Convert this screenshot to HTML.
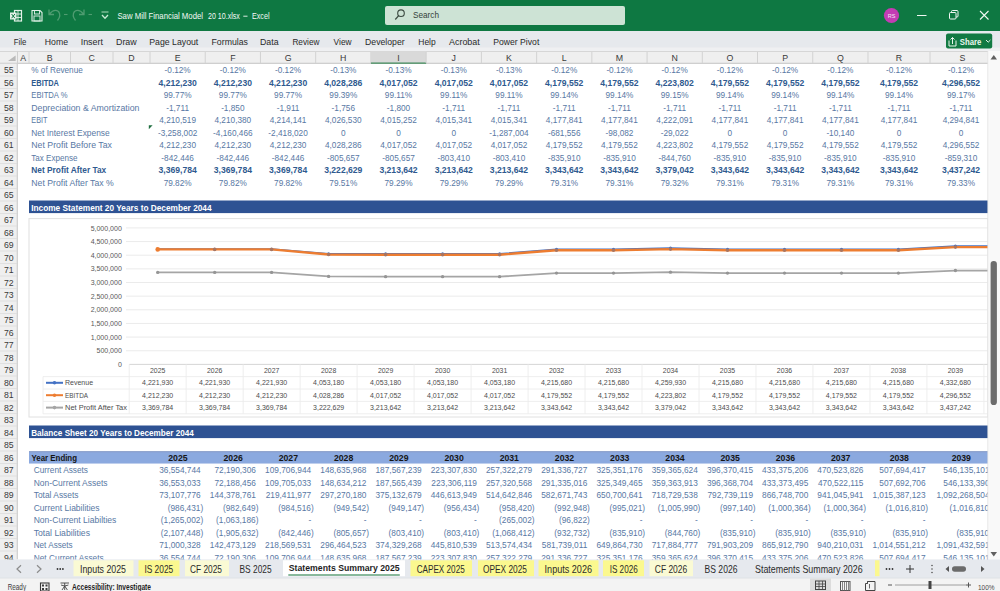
<!DOCTYPE html>
<html><head><meta charset="utf-8"><title>Saw Mill Financial Model - Excel</title>
<style>html,body{margin:0;padding:0;width:1000px;height:591px;overflow:hidden;background:#fff}svg{display:block;font-family:"Liberation Sans",sans-serif}</style></head><body>
<svg width="1000" height="591" viewBox="0 0 1000 591">
<rect x="0.00" y="0.00" width="1000.00" height="31.00" fill="#0e7842" />
<rect x="14.5" y="10.5" width="7" height="10.5" fill="none" stroke="#e3f1e8" stroke-width="1.2"/>
<line x1="14.50" y1="14.00" x2="21.50" y2="14.00" stroke="#e3f1e8" stroke-width="0.9" />
<line x1="14.50" y1="17.50" x2="21.50" y2="17.50" stroke="#e3f1e8" stroke-width="0.9" />
<line x1="18.00" y1="10.50" x2="18.00" y2="21.00" stroke="#e3f1e8" stroke-width="0.9" />
<rect x="10.00" y="12.50" width="6.50" height="7.00" fill="#e3f1e8" />
<path d="M11.6 14 L14.9 18.2 M14.9 14 L11.6 18.2" stroke="#0e7842" stroke-width="1"/>
<path d="M32 10.5 H40 L42 12.5 V21 H32 Z" fill="none" stroke="#e3f1e8" stroke-width="1.1"/>
<rect x="34.5" y="10.5" width="5" height="3.5" fill="none" stroke="#e3f1e8" stroke-width="0.9"/>
<rect x="34" y="16" width="6" height="5" fill="none" stroke="#e3f1e8" stroke-width="0.9"/>
<path d="M49 9.5 V14.5 H54 M49.5 14 Q54 8.5 58.5 11.5 Q61.5 15.5 57.5 20.5" fill="none" stroke="#4f9c71" stroke-width="1.3"/>
<line x1="64.00" y1="14.50" x2="67.50" y2="14.50" stroke="#4f9c71" stroke-width="1.1" />
<path d="M84 9.5 V14.5 H79 M83.5 14 Q79 8.5 74.5 11.5 Q71.5 15.5 75.5 20.5" fill="none" stroke="#4f9c71" stroke-width="1.3"/>
<line x1="88.50" y1="14.50" x2="92.00" y2="14.50" stroke="#4f9c71" stroke-width="1.1" />
<line x1="101.50" y1="12.00" x2="108.50" y2="12.00" stroke="#9fd3b3" stroke-width="1.1" />
<path d="M102 15 L105 18.2 L108 15" fill="none" stroke="#c6ebd4" stroke-width="1.3"/>
<text x="117.40" y="19.00" font-size="9.2" fill="#f2f8f4" textLength="85.70" lengthAdjust="spacingAndGlyphs" >Saw Mill Financial Model</text>
<text x="208.00" y="19.00" font-size="9.2" fill="#f2f8f4" textLength="31.90" lengthAdjust="spacingAndGlyphs" >20 10.xlsx</text>
<line x1="243.30" y1="16.20" x2="247.50" y2="16.20" stroke="#f2f8f4" stroke-width="0.9" />
<text x="252.00" y="19.00" font-size="9.2" fill="#f2f8f4" textLength="17.50" lengthAdjust="spacingAndGlyphs" >Excel</text>
<rect x="385" y="6" width="240" height="19" rx="2" fill="#cde3d5"/>
<circle cx="401" cy="13.2" r="3.3" fill="none" stroke="#3b4a41" stroke-width="1.1"/>
<line x1="398.60" y1="15.60" x2="395.30" y2="19.50" stroke="#3b4a41" stroke-width="1.2" />
<text x="413.00" y="18.00" font-size="9" fill="#34423a" textLength="26.00" lengthAdjust="spacingAndGlyphs" >Search</text>
<circle cx="891.5" cy="15.5" r="7.6" fill="#c33cb4"/>
<text x="891.50" y="17.80" font-size="5.5" fill="#f9e6f6" text-anchor="middle" >RS</text>
<line x1="917.00" y1="15.50" x2="926.50" y2="15.50" stroke="#f0f7f2" stroke-width="1" />
<rect x="949.5" y="12.5" width="6.5" height="6.5" rx="1" fill="none" stroke="#f0f7f2" stroke-width="1"/>
<path d="M951.5 12.5 V11.5 Q951.5 10.5 952.5 10.5 H957 Q958 10.5 958 11.5 V16 Q958 17 957 17 H956" fill="none" stroke="#f0f7f2" stroke-width="1"/>
<path d="M980 11 L988.5 19.5 M988.5 11 L980 19.5" stroke="#f0f7f2" stroke-width="1.1"/>
<rect x="0.00" y="31.00" width="1000.00" height="17.00" fill="#e6e9ed" />
<rect x="0.00" y="47.50" width="1000.00" height="3.50" fill="#eff0f2" />
<text x="13.80" y="45.00" font-size="9" fill="#2a2a2a" textLength="12.60" lengthAdjust="spacingAndGlyphs" >File</text>
<text x="44.80" y="45.00" font-size="9" fill="#2a2a2a" textLength="23.20" lengthAdjust="spacingAndGlyphs" >Home</text>
<text x="80.70" y="45.00" font-size="9" fill="#2a2a2a" textLength="22.30" lengthAdjust="spacingAndGlyphs" >Insert</text>
<text x="116.00" y="45.00" font-size="9" fill="#2a2a2a" textLength="20.70" lengthAdjust="spacingAndGlyphs" >Draw</text>
<text x="149.30" y="45.00" font-size="9" fill="#2a2a2a" textLength="49.00" lengthAdjust="spacingAndGlyphs" >Page Layout</text>
<text x="211.50" y="45.00" font-size="9" fill="#2a2a2a" textLength="36.50" lengthAdjust="spacingAndGlyphs" >Formulas</text>
<text x="260.00" y="45.00" font-size="9" fill="#2a2a2a" textLength="18.60" lengthAdjust="spacingAndGlyphs" >Data</text>
<text x="292.40" y="45.00" font-size="9" fill="#2a2a2a" textLength="27.10" lengthAdjust="spacingAndGlyphs" >Review</text>
<text x="333.60" y="45.00" font-size="9" fill="#2a2a2a" textLength="18.00" lengthAdjust="spacingAndGlyphs" >View</text>
<text x="365.00" y="45.00" font-size="9" fill="#2a2a2a" textLength="39.70" lengthAdjust="spacingAndGlyphs" >Developer</text>
<text x="418.30" y="45.00" font-size="9" fill="#2a2a2a" textLength="17.40" lengthAdjust="spacingAndGlyphs" >Help</text>
<text x="449.00" y="45.00" font-size="9" fill="#2a2a2a" textLength="30.80" lengthAdjust="spacingAndGlyphs" >Acrobat</text>
<text x="493.30" y="45.00" font-size="9" fill="#2a2a2a" textLength="46.00" lengthAdjust="spacingAndGlyphs" >Power Pivot</text>
<rect x="946" y="33.6" width="46.2" height="14.8" rx="2" fill="#127a43"/>
<path d="M949 40.5 V46 H956 V40.5" fill="none" stroke="#e8f5ec" stroke-width="1"/>
<path d="M952.5 44 V37.5 M950.5 39.5 L952.5 37.5 L954.5 39.5" fill="none" stroke="#e8f5ec" stroke-width="1"/>
<text x="959.80" y="45.00" font-size="9" fill="#eaf7ef" font-weight="bold" textLength="21.60" lengthAdjust="spacingAndGlyphs" >Share</text>
<path d="M986 40 L988.2 42.2 L990.4 40" fill="none" stroke="#e8f5ec" stroke-width="1"/>
<rect x="0.00" y="51.00" width="988.00" height="12.75" fill="#efefef" />
<line x1="0.00" y1="51.50" x2="988.00" y2="51.50" stroke="#d6d6d6" stroke-width="1" />
<line x1="0.00" y1="63.25" x2="988.00" y2="63.25" stroke="#c4c4c4" stroke-width="1" />
<line x1="29.00" y1="52.00" x2="29.00" y2="63.00" stroke="#d2d2d2" stroke-width="1" />
<text x="23.25" y="61.00" font-size="8.8" fill="#3a3a3a" text-anchor="middle" >A</text>
<line x1="70.50" y1="52.00" x2="70.50" y2="63.00" stroke="#d2d2d2" stroke-width="1" />
<text x="49.75" y="61.00" font-size="8.8" fill="#3a3a3a" text-anchor="middle" >B</text>
<line x1="113.00" y1="52.00" x2="113.00" y2="63.00" stroke="#d2d2d2" stroke-width="1" />
<text x="91.75" y="61.00" font-size="8.8" fill="#3a3a3a" text-anchor="middle" >C</text>
<line x1="150.00" y1="52.00" x2="150.00" y2="63.00" stroke="#d2d2d2" stroke-width="1" />
<text x="131.50" y="61.00" font-size="8.8" fill="#3a3a3a" text-anchor="middle" >D</text>
<line x1="205.23" y1="52.00" x2="205.23" y2="63.00" stroke="#d2d2d2" stroke-width="1" />
<text x="177.62" y="61.00" font-size="8.8" fill="#3a3a3a" text-anchor="middle" >E</text>
<line x1="260.46" y1="52.00" x2="260.46" y2="63.00" stroke="#d2d2d2" stroke-width="1" />
<text x="232.84" y="61.00" font-size="8.8" fill="#3a3a3a" text-anchor="middle" >F</text>
<line x1="315.69" y1="52.00" x2="315.69" y2="63.00" stroke="#d2d2d2" stroke-width="1" />
<text x="288.07" y="61.00" font-size="8.8" fill="#3a3a3a" text-anchor="middle" >G</text>
<line x1="370.92" y1="52.00" x2="370.92" y2="63.00" stroke="#d2d2d2" stroke-width="1" />
<text x="343.30" y="61.00" font-size="8.8" fill="#3a3a3a" text-anchor="middle" >H</text>
<rect x="370.92" y="51.50" width="55.23" height="12.00" fill="#d9d9d9" />
<line x1="370.92" y1="63.20" x2="426.15" y2="63.20" stroke="#3f8a5a" stroke-width="1.2" />
<line x1="426.15" y1="52.00" x2="426.15" y2="63.00" stroke="#d2d2d2" stroke-width="1" />
<text x="398.53" y="61.00" font-size="8.8" fill="#3a3a3a" text-anchor="middle" >I</text>
<line x1="481.38" y1="52.00" x2="481.38" y2="63.00" stroke="#d2d2d2" stroke-width="1" />
<text x="453.76" y="61.00" font-size="8.8" fill="#3a3a3a" text-anchor="middle" >J</text>
<line x1="536.61" y1="52.00" x2="536.61" y2="63.00" stroke="#d2d2d2" stroke-width="1" />
<text x="508.99" y="61.00" font-size="8.8" fill="#3a3a3a" text-anchor="middle" >K</text>
<line x1="591.84" y1="52.00" x2="591.84" y2="63.00" stroke="#d2d2d2" stroke-width="1" />
<text x="564.22" y="61.00" font-size="8.8" fill="#3a3a3a" text-anchor="middle" >L</text>
<line x1="647.07" y1="52.00" x2="647.07" y2="63.00" stroke="#d2d2d2" stroke-width="1" />
<text x="619.45" y="61.00" font-size="8.8" fill="#3a3a3a" text-anchor="middle" >M</text>
<line x1="702.30" y1="52.00" x2="702.30" y2="63.00" stroke="#d2d2d2" stroke-width="1" />
<text x="674.68" y="61.00" font-size="8.8" fill="#3a3a3a" text-anchor="middle" >N</text>
<line x1="757.53" y1="52.00" x2="757.53" y2="63.00" stroke="#d2d2d2" stroke-width="1" />
<text x="729.91" y="61.00" font-size="8.8" fill="#3a3a3a" text-anchor="middle" >O</text>
<line x1="812.76" y1="52.00" x2="812.76" y2="63.00" stroke="#d2d2d2" stroke-width="1" />
<text x="785.14" y="61.00" font-size="8.8" fill="#3a3a3a" text-anchor="middle" >P</text>
<line x1="867.99" y1="52.00" x2="867.99" y2="63.00" stroke="#d2d2d2" stroke-width="1" />
<text x="840.38" y="61.00" font-size="8.8" fill="#3a3a3a" text-anchor="middle" >Q</text>
<line x1="930.00" y1="52.00" x2="930.00" y2="63.00" stroke="#d2d2d2" stroke-width="1" />
<text x="899.00" y="61.00" font-size="8.8" fill="#3a3a3a" text-anchor="middle" >R</text>
<line x1="992.00" y1="52.00" x2="992.00" y2="63.00" stroke="#d2d2d2" stroke-width="1" />
<text x="962.50" y="61.00" font-size="8.8" fill="#3a3a3a" text-anchor="middle" >S</text>
<path d="M15.6 55.4 V61 H8 Z" fill="#b9b9b9"/>
<line x1="17.50" y1="51.50" x2="17.50" y2="63.00" stroke="#cfcfcf" stroke-width="1" />
<rect x="0.00" y="63.75" width="17.50" height="496.00" fill="#efefef" />
<line x1="17.25" y1="63.50" x2="17.25" y2="559.50" stroke="#c6c6c6" stroke-width="1" />
<line x1="0.00" y1="76.00" x2="17.00" y2="76.00" stroke="#dcdcdc" stroke-width="0.8" />
<text x="8.80" y="73.00" font-size="8.7" fill="#3a3a3a" text-anchor="middle" >55</text>
<line x1="0.00" y1="88.50" x2="17.00" y2="88.50" stroke="#dcdcdc" stroke-width="0.8" />
<text x="8.80" y="85.50" font-size="8.7" fill="#3a3a3a" text-anchor="middle" >56</text>
<line x1="0.00" y1="101.00" x2="17.00" y2="101.00" stroke="#dcdcdc" stroke-width="0.8" />
<text x="8.80" y="98.00" font-size="8.7" fill="#3a3a3a" text-anchor="middle" >57</text>
<line x1="0.00" y1="113.50" x2="17.00" y2="113.50" stroke="#dcdcdc" stroke-width="0.8" />
<text x="8.80" y="110.50" font-size="8.7" fill="#3a3a3a" text-anchor="middle" >58</text>
<line x1="0.00" y1="126.00" x2="17.00" y2="126.00" stroke="#dcdcdc" stroke-width="0.8" />
<text x="8.80" y="123.00" font-size="8.7" fill="#3a3a3a" text-anchor="middle" >59</text>
<line x1="0.00" y1="138.50" x2="17.00" y2="138.50" stroke="#dcdcdc" stroke-width="0.8" />
<text x="8.80" y="135.50" font-size="8.7" fill="#3a3a3a" text-anchor="middle" >60</text>
<line x1="0.00" y1="151.00" x2="17.00" y2="151.00" stroke="#dcdcdc" stroke-width="0.8" />
<text x="8.80" y="148.00" font-size="8.7" fill="#3a3a3a" text-anchor="middle" >61</text>
<line x1="0.00" y1="163.50" x2="17.00" y2="163.50" stroke="#dcdcdc" stroke-width="0.8" />
<text x="8.80" y="160.50" font-size="8.7" fill="#3a3a3a" text-anchor="middle" >62</text>
<line x1="0.00" y1="176.00" x2="17.00" y2="176.00" stroke="#dcdcdc" stroke-width="0.8" />
<text x="8.80" y="173.00" font-size="8.7" fill="#3a3a3a" text-anchor="middle" >63</text>
<line x1="0.00" y1="188.50" x2="17.00" y2="188.50" stroke="#dcdcdc" stroke-width="0.8" />
<text x="8.80" y="185.50" font-size="8.7" fill="#3a3a3a" text-anchor="middle" >64</text>
<line x1="0.00" y1="201.00" x2="17.00" y2="201.00" stroke="#dcdcdc" stroke-width="0.8" />
<text x="8.80" y="198.00" font-size="8.7" fill="#3a3a3a" text-anchor="middle" >65</text>
<line x1="0.00" y1="213.50" x2="17.00" y2="213.50" stroke="#dcdcdc" stroke-width="0.8" />
<text x="8.80" y="210.50" font-size="8.7" fill="#3a3a3a" text-anchor="middle" >66</text>
<line x1="0.00" y1="226.00" x2="17.00" y2="226.00" stroke="#dcdcdc" stroke-width="0.8" />
<text x="8.80" y="223.00" font-size="8.7" fill="#3a3a3a" text-anchor="middle" >67</text>
<line x1="0.00" y1="238.50" x2="17.00" y2="238.50" stroke="#dcdcdc" stroke-width="0.8" />
<text x="8.80" y="235.50" font-size="8.7" fill="#3a3a3a" text-anchor="middle" >68</text>
<line x1="0.00" y1="251.00" x2="17.00" y2="251.00" stroke="#dcdcdc" stroke-width="0.8" />
<text x="8.80" y="248.00" font-size="8.7" fill="#3a3a3a" text-anchor="middle" >69</text>
<line x1="0.00" y1="263.50" x2="17.00" y2="263.50" stroke="#dcdcdc" stroke-width="0.8" />
<text x="8.80" y="260.50" font-size="8.7" fill="#3a3a3a" text-anchor="middle" >70</text>
<line x1="0.00" y1="276.00" x2="17.00" y2="276.00" stroke="#dcdcdc" stroke-width="0.8" />
<text x="8.80" y="273.00" font-size="8.7" fill="#3a3a3a" text-anchor="middle" >71</text>
<line x1="0.00" y1="288.50" x2="17.00" y2="288.50" stroke="#dcdcdc" stroke-width="0.8" />
<text x="8.80" y="285.50" font-size="8.7" fill="#3a3a3a" text-anchor="middle" >72</text>
<line x1="0.00" y1="301.00" x2="17.00" y2="301.00" stroke="#dcdcdc" stroke-width="0.8" />
<text x="8.80" y="298.00" font-size="8.7" fill="#3a3a3a" text-anchor="middle" >73</text>
<line x1="0.00" y1="313.50" x2="17.00" y2="313.50" stroke="#dcdcdc" stroke-width="0.8" />
<text x="8.80" y="310.50" font-size="8.7" fill="#3a3a3a" text-anchor="middle" >74</text>
<line x1="0.00" y1="326.00" x2="17.00" y2="326.00" stroke="#dcdcdc" stroke-width="0.8" />
<text x="8.80" y="323.00" font-size="8.7" fill="#3a3a3a" text-anchor="middle" >75</text>
<line x1="0.00" y1="338.50" x2="17.00" y2="338.50" stroke="#dcdcdc" stroke-width="0.8" />
<text x="8.80" y="335.50" font-size="8.7" fill="#3a3a3a" text-anchor="middle" >76</text>
<line x1="0.00" y1="351.00" x2="17.00" y2="351.00" stroke="#dcdcdc" stroke-width="0.8" />
<text x="8.80" y="348.00" font-size="8.7" fill="#3a3a3a" text-anchor="middle" >77</text>
<line x1="0.00" y1="363.50" x2="17.00" y2="363.50" stroke="#dcdcdc" stroke-width="0.8" />
<text x="8.80" y="360.50" font-size="8.7" fill="#3a3a3a" text-anchor="middle" >78</text>
<line x1="0.00" y1="376.00" x2="17.00" y2="376.00" stroke="#dcdcdc" stroke-width="0.8" />
<text x="8.80" y="373.00" font-size="8.7" fill="#3a3a3a" text-anchor="middle" >79</text>
<line x1="0.00" y1="388.50" x2="17.00" y2="388.50" stroke="#dcdcdc" stroke-width="0.8" />
<text x="8.80" y="385.50" font-size="8.7" fill="#3a3a3a" text-anchor="middle" >80</text>
<line x1="0.00" y1="401.00" x2="17.00" y2="401.00" stroke="#dcdcdc" stroke-width="0.8" />
<text x="8.80" y="398.00" font-size="8.7" fill="#3a3a3a" text-anchor="middle" >81</text>
<line x1="0.00" y1="413.50" x2="17.00" y2="413.50" stroke="#dcdcdc" stroke-width="0.8" />
<text x="8.80" y="410.50" font-size="8.7" fill="#3a3a3a" text-anchor="middle" >82</text>
<line x1="0.00" y1="426.00" x2="17.00" y2="426.00" stroke="#dcdcdc" stroke-width="0.8" />
<text x="8.80" y="423.00" font-size="8.7" fill="#3a3a3a" text-anchor="middle" >83</text>
<line x1="0.00" y1="438.50" x2="17.00" y2="438.50" stroke="#dcdcdc" stroke-width="0.8" />
<text x="8.80" y="435.50" font-size="8.7" fill="#3a3a3a" text-anchor="middle" >84</text>
<line x1="0.00" y1="451.00" x2="17.00" y2="451.00" stroke="#dcdcdc" stroke-width="0.8" />
<text x="8.80" y="448.00" font-size="8.7" fill="#3a3a3a" text-anchor="middle" >85</text>
<line x1="0.00" y1="463.50" x2="17.00" y2="463.50" stroke="#dcdcdc" stroke-width="0.8" />
<text x="8.80" y="460.50" font-size="8.7" fill="#3a3a3a" text-anchor="middle" >86</text>
<line x1="0.00" y1="476.00" x2="17.00" y2="476.00" stroke="#dcdcdc" stroke-width="0.8" />
<text x="8.80" y="473.00" font-size="8.7" fill="#3a3a3a" text-anchor="middle" >87</text>
<line x1="0.00" y1="488.50" x2="17.00" y2="488.50" stroke="#dcdcdc" stroke-width="0.8" />
<text x="8.80" y="485.50" font-size="8.7" fill="#3a3a3a" text-anchor="middle" >88</text>
<line x1="0.00" y1="501.00" x2="17.00" y2="501.00" stroke="#dcdcdc" stroke-width="0.8" />
<text x="8.80" y="498.00" font-size="8.7" fill="#3a3a3a" text-anchor="middle" >89</text>
<line x1="0.00" y1="513.50" x2="17.00" y2="513.50" stroke="#dcdcdc" stroke-width="0.8" />
<text x="8.80" y="510.50" font-size="8.7" fill="#3a3a3a" text-anchor="middle" >90</text>
<line x1="0.00" y1="526.00" x2="17.00" y2="526.00" stroke="#dcdcdc" stroke-width="0.8" />
<text x="8.80" y="523.00" font-size="8.7" fill="#3a3a3a" text-anchor="middle" >91</text>
<line x1="0.00" y1="538.50" x2="17.00" y2="538.50" stroke="#dcdcdc" stroke-width="0.8" />
<text x="8.80" y="535.50" font-size="8.7" fill="#3a3a3a" text-anchor="middle" >92</text>
<line x1="0.00" y1="551.00" x2="17.00" y2="551.00" stroke="#dcdcdc" stroke-width="0.8" />
<text x="8.80" y="548.00" font-size="8.7" fill="#3a3a3a" text-anchor="middle" >93</text>
<line x1="0.00" y1="563.50" x2="17.00" y2="563.50" stroke="#dcdcdc" stroke-width="0.8" />
<text x="8.80" y="560.50" font-size="8.7" fill="#3a3a3a" text-anchor="middle" >94</text>
<text x="31.30" y="73.05" font-size="8.6" fill="#5878a4" textLength="51.45" lengthAdjust="spacingAndGlyphs" >% of Revenue</text>
<text x="177.62" y="73.05" font-size="8.25" fill="#5878a4" text-anchor="middle" >-0.12%</text>
<text x="232.84" y="73.05" font-size="8.25" fill="#5878a4" text-anchor="middle" >-0.12%</text>
<text x="288.07" y="73.05" font-size="8.25" fill="#5878a4" text-anchor="middle" >-0.12%</text>
<text x="343.30" y="73.05" font-size="8.25" fill="#5878a4" text-anchor="middle" >-0.13%</text>
<text x="398.53" y="73.05" font-size="8.25" fill="#5878a4" text-anchor="middle" >-0.13%</text>
<text x="453.76" y="73.05" font-size="8.25" fill="#5878a4" text-anchor="middle" >-0.13%</text>
<text x="508.99" y="73.05" font-size="8.25" fill="#5878a4" text-anchor="middle" >-0.13%</text>
<text x="564.22" y="73.05" font-size="8.25" fill="#5878a4" text-anchor="middle" >-0.12%</text>
<text x="619.45" y="73.05" font-size="8.25" fill="#5878a4" text-anchor="middle" >-0.12%</text>
<text x="674.68" y="73.05" font-size="8.25" fill="#5878a4" text-anchor="middle" >-0.12%</text>
<text x="729.91" y="73.05" font-size="8.25" fill="#5878a4" text-anchor="middle" >-0.12%</text>
<text x="785.14" y="73.05" font-size="8.25" fill="#5878a4" text-anchor="middle" >-0.12%</text>
<text x="840.38" y="73.05" font-size="8.25" fill="#5878a4" text-anchor="middle" >-0.12%</text>
<text x="899.00" y="73.05" font-size="8.25" fill="#5878a4" text-anchor="middle" >-0.12%</text>
<text x="961.00" y="73.05" font-size="8.25" fill="#5878a4" text-anchor="middle" >-0.12%</text>
<text x="31.30" y="85.55" font-size="8.3" fill="#2f5a8f" font-weight="bold" textLength="27.70" lengthAdjust="spacingAndGlyphs" >EBITDA</text>
<text x="177.62" y="85.55" font-size="8.6" fill="#2f5a8f" text-anchor="middle" font-weight="bold" >4,212,230</text>
<text x="232.84" y="85.55" font-size="8.6" fill="#2f5a8f" text-anchor="middle" font-weight="bold" >4,212,230</text>
<text x="288.07" y="85.55" font-size="8.6" fill="#2f5a8f" text-anchor="middle" font-weight="bold" >4,212,230</text>
<text x="343.30" y="85.55" font-size="8.6" fill="#2f5a8f" text-anchor="middle" font-weight="bold" >4,028,286</text>
<text x="398.53" y="85.55" font-size="8.6" fill="#2f5a8f" text-anchor="middle" font-weight="bold" >4,017,052</text>
<text x="453.76" y="85.55" font-size="8.6" fill="#2f5a8f" text-anchor="middle" font-weight="bold" >4,017,052</text>
<text x="508.99" y="85.55" font-size="8.6" fill="#2f5a8f" text-anchor="middle" font-weight="bold" >4,017,052</text>
<text x="564.22" y="85.55" font-size="8.6" fill="#2f5a8f" text-anchor="middle" font-weight="bold" >4,179,552</text>
<text x="619.45" y="85.55" font-size="8.6" fill="#2f5a8f" text-anchor="middle" font-weight="bold" >4,179,552</text>
<text x="674.68" y="85.55" font-size="8.6" fill="#2f5a8f" text-anchor="middle" font-weight="bold" >4,223,802</text>
<text x="729.91" y="85.55" font-size="8.6" fill="#2f5a8f" text-anchor="middle" font-weight="bold" >4,179,552</text>
<text x="785.14" y="85.55" font-size="8.6" fill="#2f5a8f" text-anchor="middle" font-weight="bold" >4,179,552</text>
<text x="840.38" y="85.55" font-size="8.6" fill="#2f5a8f" text-anchor="middle" font-weight="bold" >4,179,552</text>
<text x="899.00" y="85.55" font-size="8.6" fill="#2f5a8f" text-anchor="middle" font-weight="bold" >4,179,552</text>
<text x="961.00" y="85.55" font-size="8.6" fill="#2f5a8f" text-anchor="middle" font-weight="bold" >4,296,552</text>
<text x="31.30" y="98.05" font-size="8.6" fill="#5878a4" textLength="36.20" lengthAdjust="spacingAndGlyphs" >EBITDA %</text>
<text x="177.62" y="98.05" font-size="8.25" fill="#5878a4" text-anchor="middle" >99.77%</text>
<text x="232.84" y="98.05" font-size="8.25" fill="#5878a4" text-anchor="middle" >99.77%</text>
<text x="288.07" y="98.05" font-size="8.25" fill="#5878a4" text-anchor="middle" >99.77%</text>
<text x="343.30" y="98.05" font-size="8.25" fill="#5878a4" text-anchor="middle" >99.39%</text>
<text x="398.53" y="98.05" font-size="8.25" fill="#5878a4" text-anchor="middle" >99.11%</text>
<text x="453.76" y="98.05" font-size="8.25" fill="#5878a4" text-anchor="middle" >99.11%</text>
<text x="508.99" y="98.05" font-size="8.25" fill="#5878a4" text-anchor="middle" >99.11%</text>
<text x="564.22" y="98.05" font-size="8.25" fill="#5878a4" text-anchor="middle" >99.14%</text>
<text x="619.45" y="98.05" font-size="8.25" fill="#5878a4" text-anchor="middle" >99.14%</text>
<text x="674.68" y="98.05" font-size="8.25" fill="#5878a4" text-anchor="middle" >99.15%</text>
<text x="729.91" y="98.05" font-size="8.25" fill="#5878a4" text-anchor="middle" >99.14%</text>
<text x="785.14" y="98.05" font-size="8.25" fill="#5878a4" text-anchor="middle" >99.14%</text>
<text x="840.38" y="98.05" font-size="8.25" fill="#5878a4" text-anchor="middle" >99.14%</text>
<text x="899.00" y="98.05" font-size="8.25" fill="#5878a4" text-anchor="middle" >99.14%</text>
<text x="961.00" y="98.05" font-size="8.25" fill="#5878a4" text-anchor="middle" >99.17%</text>
<text x="31.30" y="110.55" font-size="8.6" fill="#5878a4" textLength="108.10" lengthAdjust="spacingAndGlyphs" >Depreciation &amp; Amortization</text>
<text x="177.62" y="110.55" font-size="8.25" fill="#5878a4" text-anchor="middle" >-1,711</text>
<text x="232.84" y="110.55" font-size="8.25" fill="#5878a4" text-anchor="middle" >-1,850</text>
<text x="288.07" y="110.55" font-size="8.25" fill="#5878a4" text-anchor="middle" >-1,911</text>
<text x="343.30" y="110.55" font-size="8.25" fill="#5878a4" text-anchor="middle" >-1,756</text>
<text x="398.53" y="110.55" font-size="8.25" fill="#5878a4" text-anchor="middle" >-1,800</text>
<text x="453.76" y="110.55" font-size="8.25" fill="#5878a4" text-anchor="middle" >-1,711</text>
<text x="508.99" y="110.55" font-size="8.25" fill="#5878a4" text-anchor="middle" >-1,711</text>
<text x="564.22" y="110.55" font-size="8.25" fill="#5878a4" text-anchor="middle" >-1,711</text>
<text x="619.45" y="110.55" font-size="8.25" fill="#5878a4" text-anchor="middle" >-1,711</text>
<text x="674.68" y="110.55" font-size="8.25" fill="#5878a4" text-anchor="middle" >-1,711</text>
<text x="729.91" y="110.55" font-size="8.25" fill="#5878a4" text-anchor="middle" >-1,711</text>
<text x="785.14" y="110.55" font-size="8.25" fill="#5878a4" text-anchor="middle" >-1,711</text>
<text x="840.38" y="110.55" font-size="8.25" fill="#5878a4" text-anchor="middle" >-1,711</text>
<text x="899.00" y="110.55" font-size="8.25" fill="#5878a4" text-anchor="middle" >-1,711</text>
<text x="961.00" y="110.55" font-size="8.25" fill="#5878a4" text-anchor="middle" >-1,711</text>
<text x="31.30" y="123.05" font-size="8.6" fill="#5878a4" textLength="16.20" lengthAdjust="spacingAndGlyphs" >EBIT</text>
<text x="177.62" y="123.05" font-size="8.25" fill="#5878a4" text-anchor="middle" >4,210,519</text>
<text x="232.84" y="123.05" font-size="8.25" fill="#5878a4" text-anchor="middle" >4,210,380</text>
<text x="288.07" y="123.05" font-size="8.25" fill="#5878a4" text-anchor="middle" >4,214,141</text>
<text x="343.30" y="123.05" font-size="8.25" fill="#5878a4" text-anchor="middle" >4,026,530</text>
<text x="398.53" y="123.05" font-size="8.25" fill="#5878a4" text-anchor="middle" >4,015,252</text>
<text x="453.76" y="123.05" font-size="8.25" fill="#5878a4" text-anchor="middle" >4,015,341</text>
<text x="508.99" y="123.05" font-size="8.25" fill="#5878a4" text-anchor="middle" >4,015,341</text>
<text x="564.22" y="123.05" font-size="8.25" fill="#5878a4" text-anchor="middle" >4,177,841</text>
<text x="619.45" y="123.05" font-size="8.25" fill="#5878a4" text-anchor="middle" >4,177,841</text>
<text x="674.68" y="123.05" font-size="8.25" fill="#5878a4" text-anchor="middle" >4,222,091</text>
<text x="729.91" y="123.05" font-size="8.25" fill="#5878a4" text-anchor="middle" >4,177,841</text>
<text x="785.14" y="123.05" font-size="8.25" fill="#5878a4" text-anchor="middle" >4,177,841</text>
<text x="840.38" y="123.05" font-size="8.25" fill="#5878a4" text-anchor="middle" >4,177,841</text>
<text x="899.00" y="123.05" font-size="8.25" fill="#5878a4" text-anchor="middle" >4,177,841</text>
<text x="961.00" y="123.05" font-size="8.25" fill="#5878a4" text-anchor="middle" >4,294,841</text>
<text x="31.30" y="135.55" font-size="8.6" fill="#5878a4" textLength="78.45" lengthAdjust="spacingAndGlyphs" >Net Interest Expense</text>
<text x="177.62" y="135.55" font-size="8.25" fill="#5878a4" text-anchor="middle" >-3,258,002</text>
<text x="232.84" y="135.55" font-size="8.25" fill="#5878a4" text-anchor="middle" >-4,160,466</text>
<text x="288.07" y="135.55" font-size="8.25" fill="#5878a4" text-anchor="middle" >-2,418,020</text>
<text x="343.30" y="135.55" font-size="8.25" fill="#5878a4" text-anchor="middle" >0</text>
<text x="398.53" y="135.55" font-size="8.25" fill="#5878a4" text-anchor="middle" >0</text>
<text x="453.76" y="135.55" font-size="8.25" fill="#5878a4" text-anchor="middle" >0</text>
<text x="508.99" y="135.55" font-size="8.25" fill="#5878a4" text-anchor="middle" >-1,287,004</text>
<text x="564.22" y="135.55" font-size="8.25" fill="#5878a4" text-anchor="middle" >-681,556</text>
<text x="619.45" y="135.55" font-size="8.25" fill="#5878a4" text-anchor="middle" >-98,082</text>
<text x="674.68" y="135.55" font-size="8.25" fill="#5878a4" text-anchor="middle" >-29,022</text>
<text x="729.91" y="135.55" font-size="8.25" fill="#5878a4" text-anchor="middle" >0</text>
<text x="785.14" y="135.55" font-size="8.25" fill="#5878a4" text-anchor="middle" >0</text>
<text x="840.38" y="135.55" font-size="8.25" fill="#5878a4" text-anchor="middle" >-10,140</text>
<text x="899.00" y="135.55" font-size="8.25" fill="#5878a4" text-anchor="middle" >0</text>
<text x="961.00" y="135.55" font-size="8.25" fill="#5878a4" text-anchor="middle" >0</text>
<text x="31.30" y="148.05" font-size="8.6" fill="#5878a4" textLength="80.60" lengthAdjust="spacingAndGlyphs" >Net Profit Before Tax</text>
<text x="177.62" y="148.05" font-size="8.25" fill="#5878a4" text-anchor="middle" >4,212,230</text>
<text x="232.84" y="148.05" font-size="8.25" fill="#5878a4" text-anchor="middle" >4,212,230</text>
<text x="288.07" y="148.05" font-size="8.25" fill="#5878a4" text-anchor="middle" >4,212,230</text>
<text x="343.30" y="148.05" font-size="8.25" fill="#5878a4" text-anchor="middle" >4,028,286</text>
<text x="398.53" y="148.05" font-size="8.25" fill="#5878a4" text-anchor="middle" >4,017,052</text>
<text x="453.76" y="148.05" font-size="8.25" fill="#5878a4" text-anchor="middle" >4,017,052</text>
<text x="508.99" y="148.05" font-size="8.25" fill="#5878a4" text-anchor="middle" >4,017,052</text>
<text x="564.22" y="148.05" font-size="8.25" fill="#5878a4" text-anchor="middle" >4,179,552</text>
<text x="619.45" y="148.05" font-size="8.25" fill="#5878a4" text-anchor="middle" >4,179,552</text>
<text x="674.68" y="148.05" font-size="8.25" fill="#5878a4" text-anchor="middle" >4,223,802</text>
<text x="729.91" y="148.05" font-size="8.25" fill="#5878a4" text-anchor="middle" >4,179,552</text>
<text x="785.14" y="148.05" font-size="8.25" fill="#5878a4" text-anchor="middle" >4,179,552</text>
<text x="840.38" y="148.05" font-size="8.25" fill="#5878a4" text-anchor="middle" >4,179,552</text>
<text x="899.00" y="148.05" font-size="8.25" fill="#5878a4" text-anchor="middle" >4,179,552</text>
<text x="961.00" y="148.05" font-size="8.25" fill="#5878a4" text-anchor="middle" >4,296,552</text>
<text x="31.30" y="160.55" font-size="8.6" fill="#5878a4" textLength="46.20" lengthAdjust="spacingAndGlyphs" >Tax Expense</text>
<text x="177.62" y="160.55" font-size="8.25" fill="#5878a4" text-anchor="middle" >-842,446</text>
<text x="232.84" y="160.55" font-size="8.25" fill="#5878a4" text-anchor="middle" >-842,446</text>
<text x="288.07" y="160.55" font-size="8.25" fill="#5878a4" text-anchor="middle" >-842,446</text>
<text x="343.30" y="160.55" font-size="8.25" fill="#5878a4" text-anchor="middle" >-805,657</text>
<text x="398.53" y="160.55" font-size="8.25" fill="#5878a4" text-anchor="middle" >-805,657</text>
<text x="453.76" y="160.55" font-size="8.25" fill="#5878a4" text-anchor="middle" >-803,410</text>
<text x="508.99" y="160.55" font-size="8.25" fill="#5878a4" text-anchor="middle" >-803,410</text>
<text x="564.22" y="160.55" font-size="8.25" fill="#5878a4" text-anchor="middle" >-835,910</text>
<text x="619.45" y="160.55" font-size="8.25" fill="#5878a4" text-anchor="middle" >-835,910</text>
<text x="674.68" y="160.55" font-size="8.25" fill="#5878a4" text-anchor="middle" >-844,760</text>
<text x="729.91" y="160.55" font-size="8.25" fill="#5878a4" text-anchor="middle" >-835,910</text>
<text x="785.14" y="160.55" font-size="8.25" fill="#5878a4" text-anchor="middle" >-835,910</text>
<text x="840.38" y="160.55" font-size="8.25" fill="#5878a4" text-anchor="middle" >-835,910</text>
<text x="899.00" y="160.55" font-size="8.25" fill="#5878a4" text-anchor="middle" >-835,910</text>
<text x="961.00" y="160.55" font-size="8.25" fill="#5878a4" text-anchor="middle" >-859,310</text>
<text x="31.30" y="173.05" font-size="8.3" fill="#2f5a8f" font-weight="bold" textLength="74.95" lengthAdjust="spacingAndGlyphs" >Net Profit After Tax</text>
<text x="177.62" y="173.05" font-size="8.6" fill="#2f5a8f" text-anchor="middle" font-weight="bold" >3,369,784</text>
<text x="232.84" y="173.05" font-size="8.6" fill="#2f5a8f" text-anchor="middle" font-weight="bold" >3,369,784</text>
<text x="288.07" y="173.05" font-size="8.6" fill="#2f5a8f" text-anchor="middle" font-weight="bold" >3,369,784</text>
<text x="343.30" y="173.05" font-size="8.6" fill="#2f5a8f" text-anchor="middle" font-weight="bold" >3,222,629</text>
<text x="398.53" y="173.05" font-size="8.6" fill="#2f5a8f" text-anchor="middle" font-weight="bold" >3,213,642</text>
<text x="453.76" y="173.05" font-size="8.6" fill="#2f5a8f" text-anchor="middle" font-weight="bold" >3,213,642</text>
<text x="508.99" y="173.05" font-size="8.6" fill="#2f5a8f" text-anchor="middle" font-weight="bold" >3,213,642</text>
<text x="564.22" y="173.05" font-size="8.6" fill="#2f5a8f" text-anchor="middle" font-weight="bold" >3,343,642</text>
<text x="619.45" y="173.05" font-size="8.6" fill="#2f5a8f" text-anchor="middle" font-weight="bold" >3,343,642</text>
<text x="674.68" y="173.05" font-size="8.6" fill="#2f5a8f" text-anchor="middle" font-weight="bold" >3,379,042</text>
<text x="729.91" y="173.05" font-size="8.6" fill="#2f5a8f" text-anchor="middle" font-weight="bold" >3,343,642</text>
<text x="785.14" y="173.05" font-size="8.6" fill="#2f5a8f" text-anchor="middle" font-weight="bold" >3,343,642</text>
<text x="840.38" y="173.05" font-size="8.6" fill="#2f5a8f" text-anchor="middle" font-weight="bold" >3,343,642</text>
<text x="899.00" y="173.05" font-size="8.6" fill="#2f5a8f" text-anchor="middle" font-weight="bold" >3,343,642</text>
<text x="961.00" y="173.05" font-size="8.6" fill="#2f5a8f" text-anchor="middle" font-weight="bold" >3,437,242</text>
<text x="31.30" y="185.55" font-size="8.6" fill="#5878a4" textLength="82.45" lengthAdjust="spacingAndGlyphs" >Net Profit After Tax %</text>
<text x="177.62" y="185.55" font-size="8.25" fill="#5878a4" text-anchor="middle" >79.82%</text>
<text x="232.84" y="185.55" font-size="8.25" fill="#5878a4" text-anchor="middle" >79.82%</text>
<text x="288.07" y="185.55" font-size="8.25" fill="#5878a4" text-anchor="middle" >79.82%</text>
<text x="343.30" y="185.55" font-size="8.25" fill="#5878a4" text-anchor="middle" >79.51%</text>
<text x="398.53" y="185.55" font-size="8.25" fill="#5878a4" text-anchor="middle" >79.29%</text>
<text x="453.76" y="185.55" font-size="8.25" fill="#5878a4" text-anchor="middle" >79.29%</text>
<text x="508.99" y="185.55" font-size="8.25" fill="#5878a4" text-anchor="middle" >79.29%</text>
<text x="564.22" y="185.55" font-size="8.25" fill="#5878a4" text-anchor="middle" >79.31%</text>
<text x="619.45" y="185.55" font-size="8.25" fill="#5878a4" text-anchor="middle" >79.31%</text>
<text x="674.68" y="185.55" font-size="8.25" fill="#5878a4" text-anchor="middle" >79.32%</text>
<text x="729.91" y="185.55" font-size="8.25" fill="#5878a4" text-anchor="middle" >79.31%</text>
<text x="785.14" y="185.55" font-size="8.25" fill="#5878a4" text-anchor="middle" >79.31%</text>
<text x="840.38" y="185.55" font-size="8.25" fill="#5878a4" text-anchor="middle" >79.31%</text>
<text x="899.00" y="185.55" font-size="8.25" fill="#5878a4" text-anchor="middle" >79.31%</text>
<text x="961.00" y="185.55" font-size="8.25" fill="#5878a4" text-anchor="middle" >79.33%</text>
<path d="M148.8 125.2 h3.8 L148.8 129.2 Z" fill="#1f6e3f"/>
<rect x="29.00" y="200.50" width="959.00" height="12.60" fill="#2e5293" />
<text x="31.20" y="211.00" font-size="8.5" fill="#ffffff" font-weight="bold" textLength="180.40" lengthAdjust="spacingAndGlyphs" >Income Statement 20 Years to December 2044</text>
<rect x="29.00" y="425.50" width="959.00" height="12.60" fill="#2e5293" />
<text x="31.20" y="436.00" font-size="8.5" fill="#ffffff" font-weight="bold" textLength="162.60" lengthAdjust="spacingAndGlyphs" >Balance Sheet 20 Years to December 2044</text>
<rect x="29.00" y="218.60" width="959.00" height="198.40" fill="#ffffff" stroke="#e0e0e0" stroke-width="1"/>
<text x="121.80" y="367.00" font-size="7" fill="#595959" text-anchor="end" >0</text>
<line x1="126.00" y1="350.75" x2="988.00" y2="350.75" stroke="#e9e9e9" stroke-width="0.9" />
<text x="121.80" y="353.35" font-size="7" fill="#595959" text-anchor="end" >500,000</text>
<line x1="126.00" y1="337.10" x2="988.00" y2="337.10" stroke="#e9e9e9" stroke-width="0.9" />
<text x="121.80" y="339.70" font-size="7" fill="#595959" text-anchor="end" >1,000,000</text>
<line x1="126.00" y1="323.45" x2="988.00" y2="323.45" stroke="#e9e9e9" stroke-width="0.9" />
<text x="121.80" y="326.05" font-size="7" fill="#595959" text-anchor="end" >1,500,000</text>
<line x1="126.00" y1="309.80" x2="988.00" y2="309.80" stroke="#e9e9e9" stroke-width="0.9" />
<text x="121.80" y="312.40" font-size="7" fill="#595959" text-anchor="end" >2,000,000</text>
<line x1="126.00" y1="296.15" x2="988.00" y2="296.15" stroke="#e9e9e9" stroke-width="0.9" />
<text x="121.80" y="298.75" font-size="7" fill="#595959" text-anchor="end" >2,500,000</text>
<line x1="126.00" y1="282.50" x2="988.00" y2="282.50" stroke="#e9e9e9" stroke-width="0.9" />
<text x="121.80" y="285.10" font-size="7" fill="#595959" text-anchor="end" >3,000,000</text>
<line x1="126.00" y1="268.85" x2="988.00" y2="268.85" stroke="#e9e9e9" stroke-width="0.9" />
<text x="121.80" y="271.45" font-size="7" fill="#595959" text-anchor="end" >3,500,000</text>
<line x1="126.00" y1="255.20" x2="988.00" y2="255.20" stroke="#e9e9e9" stroke-width="0.9" />
<text x="121.80" y="257.80" font-size="7" fill="#595959" text-anchor="end" >4,000,000</text>
<line x1="126.00" y1="241.55" x2="988.00" y2="241.55" stroke="#e9e9e9" stroke-width="0.9" />
<text x="121.80" y="244.15" font-size="7" fill="#595959" text-anchor="end" >4,500,000</text>
<line x1="126.00" y1="227.90" x2="988.00" y2="227.90" stroke="#e9e9e9" stroke-width="0.9" />
<text x="121.80" y="230.50" font-size="7" fill="#595959" text-anchor="end" >5,000,000</text>
<line x1="129.20" y1="364.40" x2="988.00" y2="364.40" stroke="#d0d0d0" stroke-width="0.9" />
<line x1="43.00" y1="376.60" x2="988.00" y2="376.60" stroke="#ececec" stroke-width="0.9" />
<line x1="43.00" y1="389.00" x2="988.00" y2="389.00" stroke="#ececec" stroke-width="0.9" />
<line x1="43.00" y1="401.40" x2="988.00" y2="401.40" stroke="#ececec" stroke-width="0.9" />
<line x1="43.00" y1="413.80" x2="988.00" y2="413.80" stroke="#ececec" stroke-width="0.9" />
<line x1="43.00" y1="376.60" x2="43.00" y2="413.80" stroke="#ececec" stroke-width="0.9" />
<line x1="129.20" y1="364.40" x2="129.20" y2="413.80" stroke="#ececec" stroke-width="0.9" />
<line x1="186.18" y1="364.40" x2="186.18" y2="413.80" stroke="#ececec" stroke-width="0.9" />
<line x1="243.16" y1="364.40" x2="243.16" y2="413.80" stroke="#ececec" stroke-width="0.9" />
<line x1="300.14" y1="364.40" x2="300.14" y2="413.80" stroke="#ececec" stroke-width="0.9" />
<line x1="357.12" y1="364.40" x2="357.12" y2="413.80" stroke="#ececec" stroke-width="0.9" />
<line x1="414.10" y1="364.40" x2="414.10" y2="413.80" stroke="#ececec" stroke-width="0.9" />
<line x1="471.08" y1="364.40" x2="471.08" y2="413.80" stroke="#ececec" stroke-width="0.9" />
<line x1="528.06" y1="364.40" x2="528.06" y2="413.80" stroke="#ececec" stroke-width="0.9" />
<line x1="585.04" y1="364.40" x2="585.04" y2="413.80" stroke="#ececec" stroke-width="0.9" />
<line x1="642.02" y1="364.40" x2="642.02" y2="413.80" stroke="#ececec" stroke-width="0.9" />
<line x1="699.00" y1="364.40" x2="699.00" y2="413.80" stroke="#ececec" stroke-width="0.9" />
<line x1="755.98" y1="364.40" x2="755.98" y2="413.80" stroke="#ececec" stroke-width="0.9" />
<line x1="812.96" y1="364.40" x2="812.96" y2="413.80" stroke="#ececec" stroke-width="0.9" />
<line x1="869.94" y1="364.40" x2="869.94" y2="413.80" stroke="#ececec" stroke-width="0.9" />
<line x1="926.92" y1="364.40" x2="926.92" y2="413.80" stroke="#ececec" stroke-width="0.9" />
<line x1="983.90" y1="364.40" x2="983.90" y2="413.80" stroke="#ececec" stroke-width="0.9" />
<polyline points="157.7,249.14 214.7,249.14 271.6,249.14 328.6,253.75 385.6,253.75 442.6,253.75 499.6,253.75 556.5,249.31 613.5,249.31 670.5,248.10 727.5,249.31 784.5,249.31 841.5,249.31 898.4,249.31 955.4,246.12 988.0,246.12" fill="none" stroke="#4472c4" stroke-width="1.6" stroke-linejoin="round"/>
<circle cx="157.7" cy="249.14" r="1.5" fill="#4472c4"/>
<circle cx="214.7" cy="249.14" r="1.5" fill="#4472c4"/>
<circle cx="271.6" cy="249.14" r="1.5" fill="#4472c4"/>
<circle cx="328.6" cy="253.75" r="1.5" fill="#4472c4"/>
<circle cx="385.6" cy="253.75" r="1.5" fill="#4472c4"/>
<circle cx="442.6" cy="253.75" r="1.5" fill="#4472c4"/>
<circle cx="499.6" cy="253.75" r="1.5" fill="#4472c4"/>
<circle cx="556.5" cy="249.31" r="1.5" fill="#4472c4"/>
<circle cx="613.5" cy="249.31" r="1.5" fill="#4472c4"/>
<circle cx="670.5" cy="248.10" r="1.5" fill="#4472c4"/>
<circle cx="727.5" cy="249.31" r="1.5" fill="#4472c4"/>
<circle cx="784.5" cy="249.31" r="1.5" fill="#4472c4"/>
<circle cx="841.5" cy="249.31" r="1.5" fill="#4472c4"/>
<circle cx="898.4" cy="249.31" r="1.5" fill="#4472c4"/>
<circle cx="955.4" cy="246.12" r="1.5" fill="#4472c4"/>
<polyline points="157.7,272.40 214.7,272.40 271.6,272.40 328.6,276.42 385.6,276.67 442.6,276.67 499.6,276.67 556.5,273.12 613.5,273.12 670.5,272.15 727.5,273.12 784.5,273.12 841.5,273.12 898.4,273.12 955.4,270.56 988.0,270.56" fill="none" stroke="#a5a5a5" stroke-width="1.8" stroke-linejoin="round"/>
<circle cx="157.7" cy="272.40" r="1.7" fill="#959595"/>
<circle cx="214.7" cy="272.40" r="1.7" fill="#959595"/>
<circle cx="271.6" cy="272.40" r="1.7" fill="#959595"/>
<circle cx="328.6" cy="276.42" r="1.7" fill="#959595"/>
<circle cx="385.6" cy="276.67" r="1.7" fill="#959595"/>
<circle cx="442.6" cy="276.67" r="1.7" fill="#959595"/>
<circle cx="499.6" cy="276.67" r="1.7" fill="#959595"/>
<circle cx="556.5" cy="273.12" r="1.7" fill="#959595"/>
<circle cx="613.5" cy="273.12" r="1.7" fill="#959595"/>
<circle cx="670.5" cy="272.15" r="1.7" fill="#959595"/>
<circle cx="727.5" cy="273.12" r="1.7" fill="#959595"/>
<circle cx="784.5" cy="273.12" r="1.7" fill="#959595"/>
<circle cx="841.5" cy="273.12" r="1.7" fill="#959595"/>
<circle cx="898.4" cy="273.12" r="1.7" fill="#959595"/>
<circle cx="955.4" cy="270.56" r="1.7" fill="#959595"/>
<polyline points="157.7,249.41 214.7,249.41 271.6,249.41 328.6,254.43 385.6,254.73 442.6,254.73 499.6,254.73 556.5,250.30 613.5,250.30 670.5,249.09 727.5,250.30 784.5,250.30 841.5,250.30 898.4,250.30 955.4,247.10 988.0,247.10" fill="none" stroke="#ed7d31" stroke-width="2.4" stroke-linejoin="round"/>
<circle cx="157.7" cy="249.41" r="2.3" fill="#ed7d31"/>
<circle cx="214.7" cy="249.41" r="1.8" fill="#a87560"/>
<circle cx="271.6" cy="249.41" r="1.8" fill="#a87560"/>
<circle cx="328.6" cy="254.43" r="1.8" fill="#a87560"/>
<circle cx="385.6" cy="254.73" r="1.8" fill="#a87560"/>
<circle cx="442.6" cy="254.73" r="1.8" fill="#a87560"/>
<circle cx="499.6" cy="254.73" r="1.8" fill="#a87560"/>
<circle cx="556.5" cy="250.30" r="1.8" fill="#a87560"/>
<circle cx="613.5" cy="250.30" r="1.8" fill="#a87560"/>
<circle cx="670.5" cy="249.09" r="1.8" fill="#a87560"/>
<circle cx="727.5" cy="250.30" r="1.8" fill="#a87560"/>
<circle cx="784.5" cy="250.30" r="1.8" fill="#a87560"/>
<circle cx="841.5" cy="250.30" r="1.8" fill="#a87560"/>
<circle cx="898.4" cy="250.30" r="1.8" fill="#a87560"/>
<circle cx="955.4" cy="247.10" r="1.8" fill="#a87560"/>
<line x1="46.00" y1="382.80" x2="63.00" y2="382.80" stroke="#4472c4" stroke-width="2" />
<circle cx="54.5" cy="382.8" r="1.8" fill="#4472c4"/>
<line x1="46.00" y1="395.20" x2="63.00" y2="395.20" stroke="#ed7d31" stroke-width="2" />
<circle cx="54.5" cy="395.2" r="1.8" fill="#ed7d31"/>
<line x1="46.00" y1="407.60" x2="63.00" y2="407.60" stroke="#a5a5a5" stroke-width="2" />
<circle cx="54.5" cy="407.6" r="1.8" fill="#a5a5a5"/>
<text x="157.69" y="373.20" font-size="6.9" fill="#4d4d4d" text-anchor="middle" >2025</text>
<text x="157.69" y="385.40" font-size="7" fill="#4d4d4d" text-anchor="middle" >4,221,930</text>
<text x="157.69" y="397.80" font-size="7" fill="#4d4d4d" text-anchor="middle" >4,212,230</text>
<text x="157.69" y="410.20" font-size="7" fill="#4d4d4d" text-anchor="middle" >3,369,784</text>
<text x="214.67" y="373.20" font-size="6.9" fill="#4d4d4d" text-anchor="middle" >2026</text>
<text x="214.67" y="385.40" font-size="7" fill="#4d4d4d" text-anchor="middle" >4,221,930</text>
<text x="214.67" y="397.80" font-size="7" fill="#4d4d4d" text-anchor="middle" >4,212,230</text>
<text x="214.67" y="410.20" font-size="7" fill="#4d4d4d" text-anchor="middle" >3,369,784</text>
<text x="271.65" y="373.20" font-size="6.9" fill="#4d4d4d" text-anchor="middle" >2027</text>
<text x="271.65" y="385.40" font-size="7" fill="#4d4d4d" text-anchor="middle" >4,221,930</text>
<text x="271.65" y="397.80" font-size="7" fill="#4d4d4d" text-anchor="middle" >4,212,230</text>
<text x="271.65" y="410.20" font-size="7" fill="#4d4d4d" text-anchor="middle" >3,369,784</text>
<text x="328.63" y="373.20" font-size="6.9" fill="#4d4d4d" text-anchor="middle" >2028</text>
<text x="328.63" y="385.40" font-size="7" fill="#4d4d4d" text-anchor="middle" >4,053,180</text>
<text x="328.63" y="397.80" font-size="7" fill="#4d4d4d" text-anchor="middle" >4,028,286</text>
<text x="328.63" y="410.20" font-size="7" fill="#4d4d4d" text-anchor="middle" >3,222,629</text>
<text x="385.61" y="373.20" font-size="6.9" fill="#4d4d4d" text-anchor="middle" >2029</text>
<text x="385.61" y="385.40" font-size="7" fill="#4d4d4d" text-anchor="middle" >4,053,180</text>
<text x="385.61" y="397.80" font-size="7" fill="#4d4d4d" text-anchor="middle" >4,017,052</text>
<text x="385.61" y="410.20" font-size="7" fill="#4d4d4d" text-anchor="middle" >3,213,642</text>
<text x="442.59" y="373.20" font-size="6.9" fill="#4d4d4d" text-anchor="middle" >2030</text>
<text x="442.59" y="385.40" font-size="7" fill="#4d4d4d" text-anchor="middle" >4,053,180</text>
<text x="442.59" y="397.80" font-size="7" fill="#4d4d4d" text-anchor="middle" >4,017,052</text>
<text x="442.59" y="410.20" font-size="7" fill="#4d4d4d" text-anchor="middle" >3,213,642</text>
<text x="499.57" y="373.20" font-size="6.9" fill="#4d4d4d" text-anchor="middle" >2031</text>
<text x="499.57" y="385.40" font-size="7" fill="#4d4d4d" text-anchor="middle" >4,053,180</text>
<text x="499.57" y="397.80" font-size="7" fill="#4d4d4d" text-anchor="middle" >4,017,052</text>
<text x="499.57" y="410.20" font-size="7" fill="#4d4d4d" text-anchor="middle" >3,213,642</text>
<text x="556.55" y="373.20" font-size="6.9" fill="#4d4d4d" text-anchor="middle" >2032</text>
<text x="556.55" y="385.40" font-size="7" fill="#4d4d4d" text-anchor="middle" >4,215,680</text>
<text x="556.55" y="397.80" font-size="7" fill="#4d4d4d" text-anchor="middle" >4,179,552</text>
<text x="556.55" y="410.20" font-size="7" fill="#4d4d4d" text-anchor="middle" >3,343,642</text>
<text x="613.53" y="373.20" font-size="6.9" fill="#4d4d4d" text-anchor="middle" >2033</text>
<text x="613.53" y="385.40" font-size="7" fill="#4d4d4d" text-anchor="middle" >4,215,680</text>
<text x="613.53" y="397.80" font-size="7" fill="#4d4d4d" text-anchor="middle" >4,179,552</text>
<text x="613.53" y="410.20" font-size="7" fill="#4d4d4d" text-anchor="middle" >3,343,642</text>
<text x="670.51" y="373.20" font-size="6.9" fill="#4d4d4d" text-anchor="middle" >2034</text>
<text x="670.51" y="385.40" font-size="7" fill="#4d4d4d" text-anchor="middle" >4,259,930</text>
<text x="670.51" y="397.80" font-size="7" fill="#4d4d4d" text-anchor="middle" >4,223,802</text>
<text x="670.51" y="410.20" font-size="7" fill="#4d4d4d" text-anchor="middle" >3,379,042</text>
<text x="727.49" y="373.20" font-size="6.9" fill="#4d4d4d" text-anchor="middle" >2035</text>
<text x="727.49" y="385.40" font-size="7" fill="#4d4d4d" text-anchor="middle" >4,215,680</text>
<text x="727.49" y="397.80" font-size="7" fill="#4d4d4d" text-anchor="middle" >4,179,552</text>
<text x="727.49" y="410.20" font-size="7" fill="#4d4d4d" text-anchor="middle" >3,343,642</text>
<text x="784.47" y="373.20" font-size="6.9" fill="#4d4d4d" text-anchor="middle" >2036</text>
<text x="784.47" y="385.40" font-size="7" fill="#4d4d4d" text-anchor="middle" >4,215,680</text>
<text x="784.47" y="397.80" font-size="7" fill="#4d4d4d" text-anchor="middle" >4,179,552</text>
<text x="784.47" y="410.20" font-size="7" fill="#4d4d4d" text-anchor="middle" >3,343,642</text>
<text x="841.45" y="373.20" font-size="6.9" fill="#4d4d4d" text-anchor="middle" >2037</text>
<text x="841.45" y="385.40" font-size="7" fill="#4d4d4d" text-anchor="middle" >4,215,680</text>
<text x="841.45" y="397.80" font-size="7" fill="#4d4d4d" text-anchor="middle" >4,179,552</text>
<text x="841.45" y="410.20" font-size="7" fill="#4d4d4d" text-anchor="middle" >3,343,642</text>
<text x="898.43" y="373.20" font-size="6.9" fill="#4d4d4d" text-anchor="middle" >2038</text>
<text x="898.43" y="385.40" font-size="7" fill="#4d4d4d" text-anchor="middle" >4,215,680</text>
<text x="898.43" y="397.80" font-size="7" fill="#4d4d4d" text-anchor="middle" >4,179,552</text>
<text x="898.43" y="410.20" font-size="7" fill="#4d4d4d" text-anchor="middle" >3,343,642</text>
<text x="955.41" y="373.20" font-size="6.9" fill="#4d4d4d" text-anchor="middle" >2039</text>
<text x="955.41" y="385.40" font-size="7" fill="#4d4d4d" text-anchor="middle" >4,332,680</text>
<text x="955.41" y="397.80" font-size="7" fill="#4d4d4d" text-anchor="middle" >4,296,552</text>
<text x="955.41" y="410.20" font-size="7" fill="#4d4d4d" text-anchor="middle" >3,437,242</text>
<text x="65.00" y="385.40" font-size="7" fill="#4d4d4d" >Revenue</text>
<text x="65.00" y="397.80" font-size="7" fill="#4d4d4d" textLength="23.00" lengthAdjust="spacingAndGlyphs" >EBITDA</text>
<text x="65.00" y="410.20" font-size="7.3" fill="#4d4d4d" textLength="62.00" lengthAdjust="spacingAndGlyphs" >Net Profit After Tax</text>
<rect x="29.00" y="451.25" width="959.00" height="12.30" fill="#8ba9df" />
<line x1="29.00" y1="451.75" x2="988.00" y2="451.75" stroke="#8a9cc6" stroke-width="1" />
<text x="31.50" y="460.55" font-size="8.2" fill="#151515" font-weight="bold" textLength="45.50" lengthAdjust="spacingAndGlyphs" >Year Ending</text>
<text x="177.92" y="460.55" font-size="8.7" fill="#151515" text-anchor="middle" font-weight="bold" >2025</text>
<text x="233.14" y="460.55" font-size="8.7" fill="#151515" text-anchor="middle" font-weight="bold" >2026</text>
<text x="288.38" y="460.55" font-size="8.7" fill="#151515" text-anchor="middle" font-weight="bold" >2027</text>
<text x="343.60" y="460.55" font-size="8.7" fill="#151515" text-anchor="middle" font-weight="bold" >2028</text>
<text x="398.83" y="460.55" font-size="8.7" fill="#151515" text-anchor="middle" font-weight="bold" >2029</text>
<text x="454.06" y="460.55" font-size="8.7" fill="#151515" text-anchor="middle" font-weight="bold" >2030</text>
<text x="509.29" y="460.55" font-size="8.7" fill="#151515" text-anchor="middle" font-weight="bold" >2031</text>
<text x="564.52" y="460.55" font-size="8.7" fill="#151515" text-anchor="middle" font-weight="bold" >2032</text>
<text x="619.75" y="460.55" font-size="8.7" fill="#151515" text-anchor="middle" font-weight="bold" >2033</text>
<text x="674.98" y="460.55" font-size="8.7" fill="#151515" text-anchor="middle" font-weight="bold" >2034</text>
<text x="730.21" y="460.55" font-size="8.7" fill="#151515" text-anchor="middle" font-weight="bold" >2035</text>
<text x="785.44" y="460.55" font-size="8.7" fill="#151515" text-anchor="middle" font-weight="bold" >2036</text>
<text x="840.67" y="460.55" font-size="8.7" fill="#151515" text-anchor="middle" font-weight="bold" >2037</text>
<text x="899.29" y="460.55" font-size="8.7" fill="#151515" text-anchor="middle" font-weight="bold" >2038</text>
<text x="961.30" y="460.55" font-size="8.7" fill="#151515" text-anchor="middle" font-weight="bold" >2039</text>
<text x="33.70" y="473.05" font-size="8.6" fill="#5878a4" textLength="54.30" lengthAdjust="spacingAndGlyphs" >Current Assets</text>
<text x="200.73" y="473.05" font-size="8.3" fill="#5878a4" text-anchor="end" >36,554,744</text>
<text x="255.96" y="473.05" font-size="8.3" fill="#5878a4" text-anchor="end" >72,190,306</text>
<text x="311.19" y="473.05" font-size="8.3" fill="#5878a4" text-anchor="end" >109,706,944</text>
<text x="366.42" y="473.05" font-size="8.3" fill="#5878a4" text-anchor="end" >148,635,968</text>
<text x="421.65" y="473.05" font-size="8.3" fill="#5878a4" text-anchor="end" >187,567,239</text>
<text x="476.88" y="473.05" font-size="8.3" fill="#5878a4" text-anchor="end" >223,307,830</text>
<text x="532.11" y="473.05" font-size="8.3" fill="#5878a4" text-anchor="end" >257,322,279</text>
<text x="587.34" y="473.05" font-size="8.3" fill="#5878a4" text-anchor="end" >291,336,727</text>
<text x="642.57" y="473.05" font-size="8.3" fill="#5878a4" text-anchor="end" >325,351,176</text>
<text x="697.80" y="473.05" font-size="8.3" fill="#5878a4" text-anchor="end" >359,365,624</text>
<text x="753.03" y="473.05" font-size="8.3" fill="#5878a4" text-anchor="end" >396,370,415</text>
<text x="808.26" y="473.05" font-size="8.3" fill="#5878a4" text-anchor="end" >433,375,206</text>
<text x="863.49" y="473.05" font-size="8.3" fill="#5878a4" text-anchor="end" >470,523,826</text>
<text x="925.50" y="473.05" font-size="8.3" fill="#5878a4" text-anchor="end" >507,694,417</text>
<text x="989.50" y="473.05" font-size="8.3" fill="#5878a4" text-anchor="end" >546,135,101</text>
<text x="33.70" y="485.55" font-size="8.6" fill="#5878a4" textLength="73.80" lengthAdjust="spacingAndGlyphs" >Non-Current Assets</text>
<text x="200.73" y="485.55" font-size="8.3" fill="#5878a4" text-anchor="end" >36,553,033</text>
<text x="255.96" y="485.55" font-size="8.3" fill="#5878a4" text-anchor="end" >72,188,456</text>
<text x="311.19" y="485.55" font-size="8.3" fill="#5878a4" text-anchor="end" >109,705,033</text>
<text x="366.42" y="485.55" font-size="8.3" fill="#5878a4" text-anchor="end" >148,634,212</text>
<text x="421.65" y="485.55" font-size="8.3" fill="#5878a4" text-anchor="end" >187,565,439</text>
<text x="476.88" y="485.55" font-size="8.3" fill="#5878a4" text-anchor="end" >223,306,119</text>
<text x="532.11" y="485.55" font-size="8.3" fill="#5878a4" text-anchor="end" >257,320,568</text>
<text x="587.34" y="485.55" font-size="8.3" fill="#5878a4" text-anchor="end" >291,335,016</text>
<text x="642.57" y="485.55" font-size="8.3" fill="#5878a4" text-anchor="end" >325,349,465</text>
<text x="697.80" y="485.55" font-size="8.3" fill="#5878a4" text-anchor="end" >359,363,913</text>
<text x="753.03" y="485.55" font-size="8.3" fill="#5878a4" text-anchor="end" >396,368,704</text>
<text x="808.26" y="485.55" font-size="8.3" fill="#5878a4" text-anchor="end" >433,373,495</text>
<text x="863.49" y="485.55" font-size="8.3" fill="#5878a4" text-anchor="end" >470,522,115</text>
<text x="925.50" y="485.55" font-size="8.3" fill="#5878a4" text-anchor="end" >507,692,706</text>
<text x="989.50" y="485.55" font-size="8.3" fill="#5878a4" text-anchor="end" >546,133,390</text>
<text x="33.70" y="498.05" font-size="8.6" fill="#5878a4" textLength="44.80" lengthAdjust="spacingAndGlyphs" >Total Assets</text>
<text x="200.73" y="498.05" font-size="8.3" fill="#5878a4" text-anchor="end" >73,107,776</text>
<text x="255.96" y="498.05" font-size="8.3" fill="#5878a4" text-anchor="end" >144,378,761</text>
<text x="311.19" y="498.05" font-size="8.3" fill="#5878a4" text-anchor="end" >219,411,977</text>
<text x="366.42" y="498.05" font-size="8.3" fill="#5878a4" text-anchor="end" >297,270,180</text>
<text x="421.65" y="498.05" font-size="8.3" fill="#5878a4" text-anchor="end" >375,132,679</text>
<text x="476.88" y="498.05" font-size="8.3" fill="#5878a4" text-anchor="end" >446,613,949</text>
<text x="532.11" y="498.05" font-size="8.3" fill="#5878a4" text-anchor="end" >514,642,846</text>
<text x="587.34" y="498.05" font-size="8.3" fill="#5878a4" text-anchor="end" >582,671,743</text>
<text x="642.57" y="498.05" font-size="8.3" fill="#5878a4" text-anchor="end" >650,700,641</text>
<text x="697.80" y="498.05" font-size="8.3" fill="#5878a4" text-anchor="end" >718,729,538</text>
<text x="753.03" y="498.05" font-size="8.3" fill="#5878a4" text-anchor="end" >792,739,119</text>
<text x="808.26" y="498.05" font-size="8.3" fill="#5878a4" text-anchor="end" >866,748,700</text>
<text x="863.49" y="498.05" font-size="8.3" fill="#5878a4" text-anchor="end" >941,045,941</text>
<text x="925.50" y="498.05" font-size="8.3" fill="#5878a4" text-anchor="end" >1,015,387,123</text>
<text x="989.50" y="498.05" font-size="8.3" fill="#5878a4" text-anchor="end" >1,092,268,504</text>
<text x="33.70" y="510.55" font-size="8.6" fill="#5878a4" textLength="65.90" lengthAdjust="spacingAndGlyphs" >Current Liabilities</text>
<text x="203.23" y="510.55" font-size="8.3" fill="#5878a4" text-anchor="end" >(986,431)</text>
<text x="258.46" y="510.55" font-size="8.3" fill="#5878a4" text-anchor="end" >(982,649)</text>
<text x="313.69" y="510.55" font-size="8.3" fill="#5878a4" text-anchor="end" >(984,516)</text>
<text x="368.92" y="510.55" font-size="8.3" fill="#5878a4" text-anchor="end" >(949,542)</text>
<text x="424.15" y="510.55" font-size="8.3" fill="#5878a4" text-anchor="end" >(949,147)</text>
<text x="479.38" y="510.55" font-size="8.3" fill="#5878a4" text-anchor="end" >(956,434)</text>
<text x="534.61" y="510.55" font-size="8.3" fill="#5878a4" text-anchor="end" >(958,420)</text>
<text x="589.84" y="510.55" font-size="8.3" fill="#5878a4" text-anchor="end" >(992,948)</text>
<text x="645.07" y="510.55" font-size="8.3" fill="#5878a4" text-anchor="end" >(995,021)</text>
<text x="700.30" y="510.55" font-size="8.3" fill="#5878a4" text-anchor="end" >(1,005,990)</text>
<text x="755.53" y="510.55" font-size="8.3" fill="#5878a4" text-anchor="end" >(997,140)</text>
<text x="810.76" y="510.55" font-size="8.3" fill="#5878a4" text-anchor="end" >(1,000,364)</text>
<text x="865.99" y="510.55" font-size="8.3" fill="#5878a4" text-anchor="end" >(1,000,364)</text>
<text x="928.00" y="510.55" font-size="8.3" fill="#5878a4" text-anchor="end" >(1,016,810)</text>
<text x="992.00" y="510.55" font-size="8.3" fill="#5878a4" text-anchor="end" >(1,016,810)</text>
<text x="33.70" y="523.05" font-size="8.6" fill="#5878a4" textLength="82.70" lengthAdjust="spacingAndGlyphs" >Non-Current Liabilties</text>
<text x="203.23" y="523.05" font-size="8.3" fill="#5878a4" text-anchor="end" >(1,265,002)</text>
<text x="258.46" y="523.05" font-size="8.3" fill="#5878a4" text-anchor="end" >(1,063,186)</text>
<text x="311.19" y="523.05" font-size="8.3" fill="#5878a4" text-anchor="end" >-</text>
<text x="366.42" y="523.05" font-size="8.3" fill="#5878a4" text-anchor="end" >-</text>
<text x="421.65" y="523.05" font-size="8.3" fill="#5878a4" text-anchor="end" >-</text>
<text x="476.88" y="523.05" font-size="8.3" fill="#5878a4" text-anchor="end" >-</text>
<text x="534.61" y="523.05" font-size="8.3" fill="#5878a4" text-anchor="end" >(265,002)</text>
<text x="589.84" y="523.05" font-size="8.3" fill="#5878a4" text-anchor="end" >(96,822)</text>
<text x="642.57" y="523.05" font-size="8.3" fill="#5878a4" text-anchor="end" >-</text>
<text x="697.80" y="523.05" font-size="8.3" fill="#5878a4" text-anchor="end" >-</text>
<text x="753.03" y="523.05" font-size="8.3" fill="#5878a4" text-anchor="end" >-</text>
<text x="808.26" y="523.05" font-size="8.3" fill="#5878a4" text-anchor="end" >-</text>
<text x="863.49" y="523.05" font-size="8.3" fill="#5878a4" text-anchor="end" >-</text>
<text x="925.50" y="523.05" font-size="8.3" fill="#5878a4" text-anchor="end" >-</text>
<text x="33.70" y="535.55" font-size="8.6" fill="#5878a4" textLength="56.30" lengthAdjust="spacingAndGlyphs" >Total Liabilities</text>
<text x="203.23" y="535.55" font-size="8.3" fill="#5878a4" text-anchor="end" >(2,107,448)</text>
<text x="258.46" y="535.55" font-size="8.3" fill="#5878a4" text-anchor="end" >(1,905,632)</text>
<text x="313.69" y="535.55" font-size="8.3" fill="#5878a4" text-anchor="end" >(842,446)</text>
<text x="368.92" y="535.55" font-size="8.3" fill="#5878a4" text-anchor="end" >(805,657)</text>
<text x="424.15" y="535.55" font-size="8.3" fill="#5878a4" text-anchor="end" >(803,410)</text>
<text x="479.38" y="535.55" font-size="8.3" fill="#5878a4" text-anchor="end" >(803,410)</text>
<text x="534.61" y="535.55" font-size="8.3" fill="#5878a4" text-anchor="end" >(1,068,412)</text>
<text x="589.84" y="535.55" font-size="8.3" fill="#5878a4" text-anchor="end" >(932,732)</text>
<text x="645.07" y="535.55" font-size="8.3" fill="#5878a4" text-anchor="end" >(835,910)</text>
<text x="700.30" y="535.55" font-size="8.3" fill="#5878a4" text-anchor="end" >(844,760)</text>
<text x="755.53" y="535.55" font-size="8.3" fill="#5878a4" text-anchor="end" >(835,910)</text>
<text x="810.76" y="535.55" font-size="8.3" fill="#5878a4" text-anchor="end" >(835,910)</text>
<text x="865.99" y="535.55" font-size="8.3" fill="#5878a4" text-anchor="end" >(835,910)</text>
<text x="928.00" y="535.55" font-size="8.3" fill="#5878a4" text-anchor="end" >(835,910)</text>
<text x="992.00" y="535.55" font-size="8.3" fill="#5878a4" text-anchor="end" >(835,910)</text>
<text x="33.70" y="548.05" font-size="8.6" fill="#5878a4" textLength="39.00" lengthAdjust="spacingAndGlyphs" >Net Assets</text>
<text x="200.73" y="548.05" font-size="8.3" fill="#5878a4" text-anchor="end" >71,000,328</text>
<text x="255.96" y="548.05" font-size="8.3" fill="#5878a4" text-anchor="end" >142,473,129</text>
<text x="311.19" y="548.05" font-size="8.3" fill="#5878a4" text-anchor="end" >218,569,531</text>
<text x="366.42" y="548.05" font-size="8.3" fill="#5878a4" text-anchor="end" >296,464,523</text>
<text x="421.65" y="548.05" font-size="8.3" fill="#5878a4" text-anchor="end" >374,329,268</text>
<text x="476.88" y="548.05" font-size="8.3" fill="#5878a4" text-anchor="end" >445,810,539</text>
<text x="532.11" y="548.05" font-size="8.3" fill="#5878a4" text-anchor="end" >513,574,434</text>
<text x="587.34" y="548.05" font-size="8.3" fill="#5878a4" text-anchor="end" >581,739,011</text>
<text x="642.57" y="548.05" font-size="8.3" fill="#5878a4" text-anchor="end" >649,864,730</text>
<text x="697.80" y="548.05" font-size="8.3" fill="#5878a4" text-anchor="end" >717,884,777</text>
<text x="753.03" y="548.05" font-size="8.3" fill="#5878a4" text-anchor="end" >791,903,209</text>
<text x="808.26" y="548.05" font-size="8.3" fill="#5878a4" text-anchor="end" >865,912,790</text>
<text x="863.49" y="548.05" font-size="8.3" fill="#5878a4" text-anchor="end" >940,210,031</text>
<text x="925.50" y="548.05" font-size="8.3" fill="#5878a4" text-anchor="end" >1,014,551,212</text>
<text x="989.50" y="548.05" font-size="8.3" fill="#5878a4" text-anchor="end" >1,091,432,591</text>
<text x="33.70" y="560.55" font-size="8.6" fill="#5878a4" textLength="70.00" lengthAdjust="spacingAndGlyphs" >Net Current Assets</text>
<text x="200.73" y="560.55" font-size="8.3" fill="#5878a4" text-anchor="end" >36,554,744</text>
<text x="255.96" y="560.55" font-size="8.3" fill="#5878a4" text-anchor="end" >72,190,306</text>
<text x="311.19" y="560.55" font-size="8.3" fill="#5878a4" text-anchor="end" >109,706,944</text>
<text x="366.42" y="560.55" font-size="8.3" fill="#5878a4" text-anchor="end" >148,635,968</text>
<text x="421.65" y="560.55" font-size="8.3" fill="#5878a4" text-anchor="end" >187,567,239</text>
<text x="476.88" y="560.55" font-size="8.3" fill="#5878a4" text-anchor="end" >223,307,830</text>
<text x="532.11" y="560.55" font-size="8.3" fill="#5878a4" text-anchor="end" >257,322,279</text>
<text x="587.34" y="560.55" font-size="8.3" fill="#5878a4" text-anchor="end" >291,336,727</text>
<text x="642.57" y="560.55" font-size="8.3" fill="#5878a4" text-anchor="end" >325,351,176</text>
<text x="697.80" y="560.55" font-size="8.3" fill="#5878a4" text-anchor="end" >359,365,624</text>
<text x="753.03" y="560.55" font-size="8.3" fill="#5878a4" text-anchor="end" >396,370,415</text>
<text x="808.26" y="560.55" font-size="8.3" fill="#5878a4" text-anchor="end" >433,375,206</text>
<text x="863.49" y="560.55" font-size="8.3" fill="#5878a4" text-anchor="end" >470,523,826</text>
<text x="925.50" y="560.55" font-size="8.3" fill="#5878a4" text-anchor="end" >507,694,417</text>
<text x="989.50" y="560.55" font-size="8.3" fill="#5878a4" text-anchor="end" >546,135,101</text>
<rect x="988.00" y="51.00" width="12.00" height="508.50" fill="#f9f9f9" />
<line x1="987.75" y1="51.00" x2="987.75" y2="559.50" stroke="#e2e2e2" stroke-width="0.8" />
<rect x="990.6" y="261" width="6.3" height="144" rx="3.1" fill="#6d6d6d"/>
<path d="M990.5 59.5 L993.8 55 L997 59.5 Z" fill="#606060"/>
<path d="M990.5 552 L993.8 556.5 L997 552 Z" fill="#606060"/>
<rect x="0.00" y="559.40" width="1000.00" height="18.60" fill="#e6e9ee" />
<rect x="0.00" y="578.00" width="1000.00" height="13.00" fill="#f3f3f3" />
<line x1="0.00" y1="578.00" x2="1000.00" y2="578.00" stroke="#dfe2e6" stroke-width="1" />
<path d="M21 565.3 L17 569 L21 572.7" fill="none" stroke="#8c8c8c" stroke-width="1.2"/>
<path d="M37 565.3 L41 569 L37 572.7" fill="none" stroke="#8c8c8c" stroke-width="1.2"/>
<circle cx="57.5" cy="569" r="0.9" fill="#333"/>
<circle cx="60.2" cy="569" r="0.9" fill="#333"/>
<circle cx="62.9" cy="569" r="0.9" fill="#333"/>
<rect x="73.50" y="560.30" width="60.00" height="15.90" fill="#fafad4" />
<text x="80.00" y="573.00" font-size="10.2" fill="#2b2b2b" textLength="46.00" lengthAdjust="spacingAndGlyphs" >Inputs 2025</text>
<rect x="138.50" y="560.30" width="41.00" height="15.90" fill="#fbf88f" />
<text x="144.40" y="573.00" font-size="10.2" fill="#2b2b2b" textLength="28.80" lengthAdjust="spacingAndGlyphs" >IS 2025</text>
<rect x="185.00" y="560.30" width="44.00" height="15.90" fill="#fafad4" />
<text x="190.00" y="573.00" font-size="10.2" fill="#2b2b2b" textLength="32.00" lengthAdjust="spacingAndGlyphs" >CF 2025</text>
<rect x="232.00" y="560.30" width="46.50" height="15.90" fill="#e6e9ee" />
<text x="239.50" y="573.00" font-size="10.2" fill="#2b2b2b" textLength="32.10" lengthAdjust="spacingAndGlyphs" >BS 2025</text>
<rect x="283.00" y="560.30" width="122.00" height="15.90" fill="#ffffff" />
<text x="288.80" y="571.00" font-size="9.3" fill="#1f1f1f" font-weight="bold" textLength="110.80" lengthAdjust="spacingAndGlyphs" >Statements Summary 2025</text>
<rect x="410.50" y="560.30" width="61.50" height="15.90" fill="#fbf88f" />
<text x="416.70" y="573.00" font-size="10.2" fill="#2b2b2b" textLength="48.00" lengthAdjust="spacingAndGlyphs" >CAPEX 2025</text>
<rect x="478.00" y="560.30" width="56.00" height="15.90" fill="#fbf88f" />
<text x="483.00" y="573.00" font-size="10.2" fill="#2b2b2b" textLength="44.00" lengthAdjust="spacingAndGlyphs" >OPEX 2025</text>
<rect x="538.50" y="560.30" width="60.00" height="15.90" fill="#fbf88f" />
<text x="544.60" y="573.00" font-size="10.2" fill="#2b2b2b" textLength="47.40" lengthAdjust="spacingAndGlyphs" >Inputs 2026</text>
<rect x="603.00" y="560.30" width="41.00" height="15.90" fill="#fbf88f" />
<text x="609.70" y="573.00" font-size="10.2" fill="#2b2b2b" textLength="28.00" lengthAdjust="spacingAndGlyphs" >IS 2026</text>
<rect x="649.50" y="560.30" width="43.50" height="15.90" fill="#fafad4" />
<text x="654.80" y="573.00" font-size="10.2" fill="#2b2b2b" textLength="32.40" lengthAdjust="spacingAndGlyphs" >CF 2026</text>
<rect x="697.50" y="560.30" width="46.50" height="15.90" fill="#e6e9ee" />
<text x="704.60" y="573.00" font-size="10.2" fill="#2b2b2b" textLength="32.80" lengthAdjust="spacingAndGlyphs" >BS 2026</text>
<rect x="750.00" y="560.30" width="123.00" height="15.90" fill="#e6e9ee" />
<text x="755.00" y="573.00" font-size="10.2" fill="#2b2b2b" textLength="107.70" lengthAdjust="spacingAndGlyphs" >Statements Summary 2026</text>
<rect x="288.30" y="574.40" width="111.50" height="1.20" fill="#3a8a5a" />
<rect x="875.00" y="560.30" width="4.50" height="15.90" fill="#fbf88f" />
<circle cx="886.5" cy="569" r="0.9" fill="#333"/>
<circle cx="889.5" cy="569" r="0.9" fill="#333"/>
<circle cx="892.5" cy="569" r="0.9" fill="#333"/>
<line x1="906.00" y1="569.00" x2="914.00" y2="569.00" stroke="#333" stroke-width="1" />
<line x1="910.00" y1="565.00" x2="910.00" y2="573.00" stroke="#333" stroke-width="1" />
<circle cx="932" cy="565.5" r="0.8" fill="#555"/>
<circle cx="932" cy="569" r="0.8" fill="#555"/>
<circle cx="932" cy="572.5" r="0.8" fill="#555"/>
<path d="M945.5 569 L949 566 V572 Z" fill="#555"/>
<rect x="952" y="566.3" width="14" height="5.4" rx="2.7" fill="#6b6b6b"/>
<path d="M984.5 569 L981 566 V572 Z" fill="#555"/>
<text x="7.70" y="590.00" font-size="8.6" fill="#3d3d3d" textLength="18.40" lengthAdjust="spacingAndGlyphs" >Ready</text>
<rect x="40.5" y="583" width="8.5" height="8" fill="none" stroke="#3a3a3a" stroke-width="1.1"/>
<rect x="42.00" y="584.50" width="2.00" height="2.00" fill="#3a3a3a" />
<rect x="45.50" y="584.50" width="2.00" height="2.00" fill="#3a3a3a" />
<rect x="42.00" y="588.00" width="2.00" height="2.00" fill="#3a3a3a" />
<rect x="45.50" y="588.00" width="2.00" height="2.00" fill="#3a3a3a" />
<path d="M60.5 583 H69 M64.7 583 V590 M62 590 L64.7 586 L67.4 590 M61 585 L64.7 586 L68.4 585" fill="none" stroke="#444" stroke-width="0.9"/>
<text x="72.00" y="590.00" font-size="8.4" fill="#1f1f1f" font-weight="bold" textLength="79.00" lengthAdjust="spacingAndGlyphs" >Accessibility: Investigate</text>
<rect x="810.00" y="578.50" width="21.00" height="12.50" fill="#dcdcdc" />
<rect x="815.5" y="581" width="10" height="8.5" fill="none" stroke="#444" stroke-width="1"/>
<line x1="815.50" y1="584.00" x2="825.50" y2="584.00" stroke="#444" stroke-width="0.8" />
<line x1="815.50" y1="586.50" x2="825.50" y2="586.50" stroke="#444" stroke-width="0.8" />
<line x1="819.00" y1="581.00" x2="819.00" y2="589.50" stroke="#444" stroke-width="0.8" />
<line x1="822.50" y1="581.00" x2="822.50" y2="589.50" stroke="#444" stroke-width="0.8" />
<rect x="840.5" y="581.5" width="9.5" height="9" fill="none" stroke="#555" stroke-width="1"/>
<line x1="842.50" y1="581.50" x2="842.50" y2="590.50" stroke="#666" stroke-width="0.8" />
<line x1="844.50" y1="581.50" x2="844.50" y2="590.50" stroke="#666" stroke-width="0.8" />
<line x1="846.50" y1="581.50" x2="846.50" y2="590.50" stroke="#666" stroke-width="0.8" />
<line x1="848.50" y1="581.50" x2="848.50" y2="590.50" stroke="#666" stroke-width="0.8" />
<path d="M867.5 581.5 H875 V590.5 H865.5 V583.5 H867.5 Z M867.5 581.5 V583.5" fill="none" stroke="#444" stroke-width="1"/>
<line x1="869.50" y1="584.00" x2="869.50" y2="588.50" stroke="#444" stroke-width="0.8" />
<line x1="888.00" y1="585.00" x2="892.00" y2="585.00" stroke="#555" stroke-width="1" />
<line x1="895.00" y1="585.00" x2="966.00" y2="585.00" stroke="#888" stroke-width="0.8" />
<rect x="928.50" y="581.00" width="3.00" height="8.00" fill="#444" />
<line x1="966.00" y1="585.00" x2="971.00" y2="585.00" stroke="#555" stroke-width="1" />
<line x1="968.50" y1="582.50" x2="968.50" y2="587.50" stroke="#555" stroke-width="1" />
<text x="978.00" y="590.00" font-size="7.5" fill="#4a4a4a" textLength="16.50" lengthAdjust="spacingAndGlyphs" >100%</text>
</svg>
</body></html>
